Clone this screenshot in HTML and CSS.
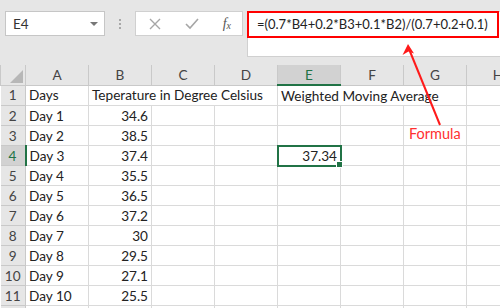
FILE: index.html
```html
<!DOCTYPE html>
<html lang="en">
<head>
  <meta charset="UTF-8">
  <title>Weighted Moving Average</title>
  <link rel="stylesheet" href="styles.css">
</head>
<body>
  <div class="toolbar">
    <div class="namebox">
      <span>E4</span>
      <span class="caret"></span>
    </div>
    <div class="grip"><i></i><i></i><i></i></div>
    <div class="fx-buttons">
      <svg width="14" height="14" viewBox="0 0 14 14"><path d="M2 2 L12 12 M12 2 L2 12" stroke="#a6a6a6" stroke-width="1.4" fill="none"/></svg>
      <svg width="16" height="14" viewBox="0 0 16 14"><path d="M2 7 L6 11 L14 2" stroke="#a6a6a6" stroke-width="1.6" fill="none"/></svg>
      <span class="fx">f<sub>x</sub></span>
    </div>
    <div class="formula-bar">
      <div class="formula">=(0.7*B4+0.2*B3+0.1*B2)/(0.7+0.2+0.1)</div>
    </div>
  </div>

  <table class="sheet">
    <colgroup>
      <col class="rh">
      <col><col><col><col><col><col><col><col>
    </colgroup>
    <thead>
      <tr>
        <th class="corner"><span class="tri"></span></th>
        <th>A</th><th>B</th><th>C</th><th>D</th><th class="sel">E</th><th>F</th><th>G</th><th>H</th>
      </tr>
    </thead>
    <tbody>
      <tr><th>1</th><td>Days</td><td colspan="3" class="wide">Teperature in Degree Celsius</td><td colspan="3" class="wide">Weighted Moving Average</td><td></td></tr>
      <tr><th>2</th><td>Day 1</td><td class="num">34.6</td><td></td><td></td><td></td><td></td><td></td><td></td></tr>
      <tr><th>3</th><td>Day 2</td><td class="num">38.5</td><td></td><td></td><td></td><td></td><td></td><td></td></tr>
      <tr><th class="sel">4</th><td>Day 3</td><td class="num">37.4</td><td></td><td></td><td class="num active">37.34<span class="handle"></span></td><td></td><td></td><td></td></tr>
      <tr><th>5</th><td>Day 4</td><td class="num">35.5</td><td></td><td></td><td></td><td></td><td></td><td></td></tr>
      <tr><th>6</th><td>Day 5</td><td class="num">36.5</td><td></td><td></td><td></td><td></td><td></td><td></td></tr>
      <tr><th>7</th><td>Day 6</td><td class="num">37.2</td><td></td><td></td><td></td><td></td><td></td><td></td></tr>
      <tr><th>8</th><td>Day 7</td><td class="num">30</td><td></td><td></td><td></td><td></td><td></td><td></td></tr>
      <tr><th>9</th><td>Day 8</td><td class="num">29.5</td><td></td><td></td><td></td><td></td><td></td><td></td></tr>
      <tr><th>10</th><td>Day 9</td><td class="num">27.1</td><td></td><td></td><td></td><td></td><td></td><td></td></tr>
      <tr><th>11</th><td>Day 10</td><td class="num">25.5</td><td></td><td></td><td></td><td></td><td></td><td></td></tr>
      <tr><th></th><td></td><td></td><td></td><td></td><td></td><td></td><td></td><td></td></tr>
    </tbody>
  </table>

  <!-- annotation -->
  <svg class="callout" width="500" height="308" viewBox="0 0 500 308">
    <line x1="440" y1="125" x2="409" y2="49" stroke="#ff1a1a" stroke-width="2"/>
    <path d="M408 44 L402.5 55 L408.5 51.5 L414 53.5 Z" fill="#ff1a1a"/>
  </svg>
  <div class="callout-label">Formula</div>
</body>
</html>
```

FILE: styles.css
```css
body {
  margin: 0;
  width: 500px;
  height: 308px;
  overflow: hidden;
  font-family: Lato, "Liberation Sans", sans-serif;
  background: #fff;
  position: relative;
}

.toolbar {
  height: 65px;
  background: #e6e6e6;
  display: flex;
  align-items: flex-start;
  padding-top: 11px;
  box-sizing: border-box;
}
.namebox {
  margin-left: 5px;
  width: 100px;
  height: 25px;
  box-sizing: border-box;
  background: #fff;
  border: 1px solid #c6c6c6;
  display: flex;
  align-items: center;
  justify-content: space-between;
  padding: 0 6px 0 7px;
  font-size: 13.5px;
  color: #333;
}
.caret {
  width: 0;
  height: 0;
  border-left: 4px solid transparent;
  border-right: 4px solid transparent;
  border-top: 4px solid #777;
}
.grip {
  width: 30px;
  height: 25px;
  display: flex;
  flex-direction: column;
  align-items: center;
  justify-content: center;
  gap: 2px;
}
.grip i {
  width: 2px;
  height: 2px;
  background: #a8a8a8;
}
.fx-buttons {
  width: 108px;
  height: 25px;
  box-sizing: border-box;
  background: #fff;
  border: 1px solid #d0d0d0;
  display: flex;
  align-items: center;
  justify-content: space-between;
  padding: 0 11px 0 12px;
}
.fx {
  font-family: "Liberation Serif", serif;
  font-style: italic;
  font-size: 14px;
  color: #555;
}
.fx sub {
  font-size: 10px;
  vertical-align: -1px;
}
.formula-bar {
  margin-left: 4px;
  flex: 1;
  height: 44px;
  background: #fff;
  border: 1px solid #d0d0d0;
  border-right: 0;
}
.formula {
  height: 27px;
  box-sizing: border-box;
  border: 2px solid #ff0000;
  margin: -1px 1px 0 -1px;
  padding-left: 8px;
  font-size: 13px;
  line-height: 23px;
  color: #222;
}

.sheet {
  border-collapse: collapse;
  table-layout: fixed;
  width: 530px;
  font-size: 13.6px;
  color: #222;
}
.sheet col { width: 63px; }
.sheet col.rh { width: 25px; }
.sheet th,
.sheet td {
  height: 19px;
  padding: 0 3px;
  border: 1px solid #dadada;
  white-space: nowrap;
  overflow: visible;
}
.sheet th {
  background: #e6e6e6;
  font-weight: normal;
  color: #444;
  border-color: #c9c9c9;
  text-align: center;
  padding: 0;
}
.sheet thead th {
  border-top: 0;
}
.sheet tbody th {
  border-left: 0;
}
.sheet th.sel {
  background: #d2d2d2;
  color: #217346;
}
.sheet thead th.sel {
  border-bottom: 2px solid #217346;
}
.sheet tbody th.sel {
  border-right: 2px solid #217346;
}
.corner {
  position: relative;
}
.tri {
  position: absolute;
  right: 2px;
  bottom: 2px;
  width: 0;
  height: 0;
  border-left: 13px solid transparent;
  border-bottom: 13px solid #b7b7b7;
}
.num {
  text-align: right;
}
.active {
  position: relative;
  outline: 2px solid #217346;
  outline-offset: -1px;
}
.handle {
  position: absolute;
  right: -3px;
  bottom: -3px;
  width: 5px;
  height: 5px;
  background: #217346;
  border: 1px solid #fff;
}

.callout {
  position: absolute;
  left: 0;
  top: 0;
  pointer-events: none;
}
.callout-label {
  position: absolute;
  left: 409px;
  top: 125px;
  font-size: 14.5px;
  color: #ff3030;
}
```
